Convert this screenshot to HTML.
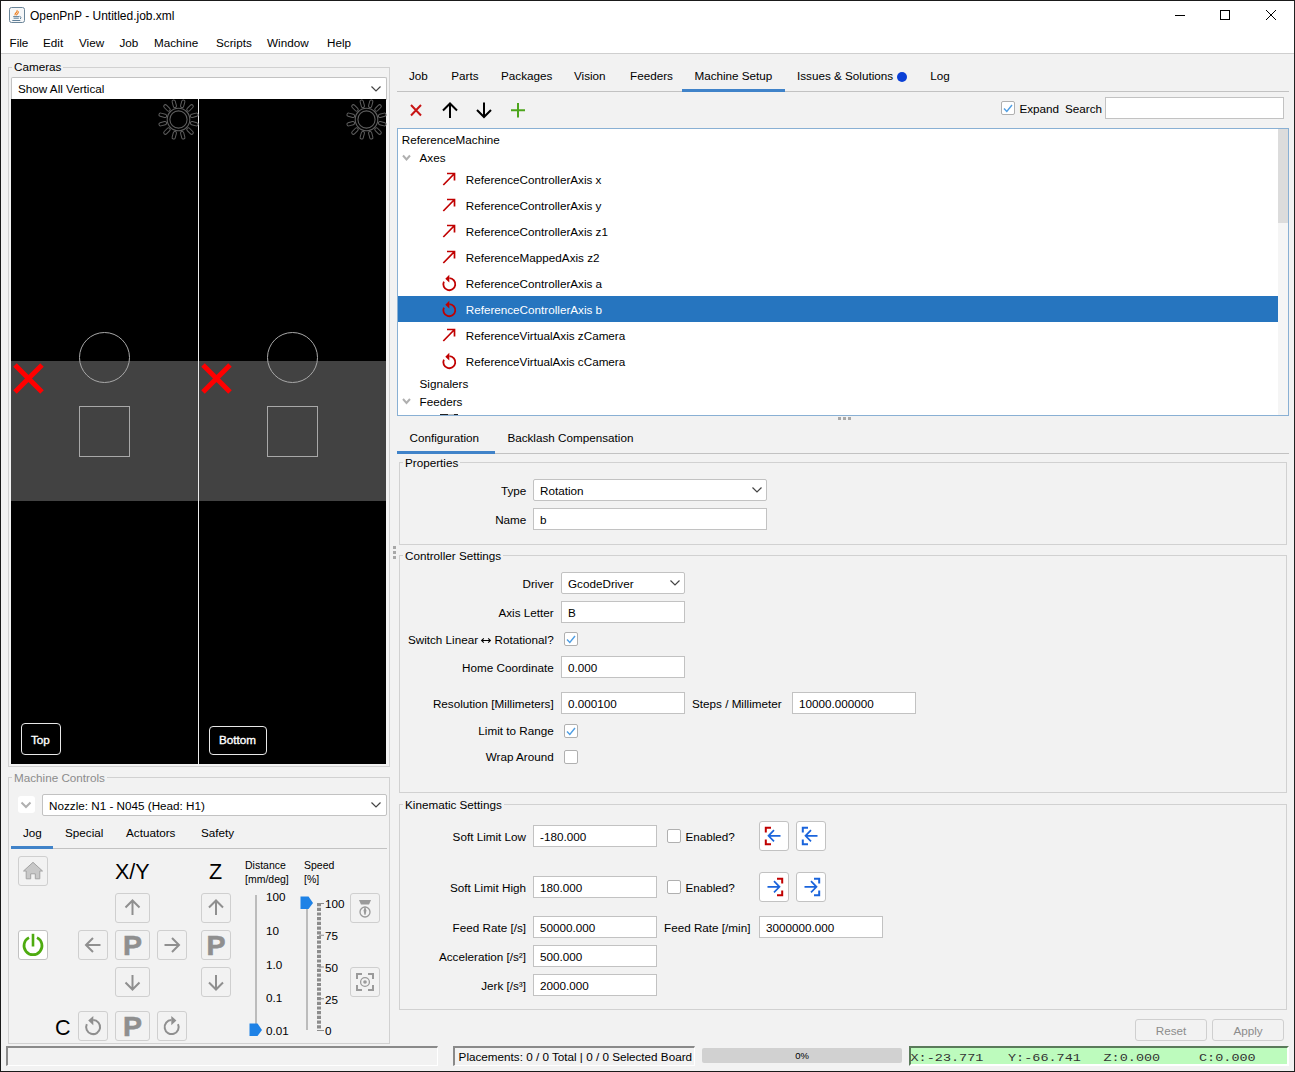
<!DOCTYPE html>
<html><head><meta charset="utf-8">
<style>
*{box-sizing:border-box;margin:0;padding:0}
html,body{width:1295px;height:1072px;overflow:hidden;background:#f2f2f2;font-family:"Liberation Sans",sans-serif;font-size:11.7px;color:#000}
.a{position:absolute}
.t{position:absolute;white-space:nowrap;line-height:16px;font-size:11.7px}
.r{text-align:right}
.grp{position:absolute;border:1px solid #d1d1d1}
.gl{position:absolute;white-space:nowrap;line-height:16px;background:#f2f2f2;padding:0 2px 0 2px}
.fld{position:absolute;background:#fff;border:1px solid #c2c2c2}
.cmb{position:absolute;background:#fff;border:1px solid #c2c2c2;border-radius:2px}
.chk{position:absolute;width:14px;height:14px;background:#fff;border:1px solid #b0b0b0;border-radius:2px}
.btn{position:absolute;border:1px solid #cfcfcf;border-radius:3px;background:#f2f2f2}
.wbtn{position:absolute;border:1px solid #c2c2c2;border-radius:3px;background:#fff}
svg{position:absolute;overflow:visible}
</style></head><body>
<!-- window frame -->
<div class="a" style="left:0;top:0;width:1295px;height:1072px;border:1px solid #1a1a1a;border-right-color:#222;"></div>
<!-- title + menu -->
<div class="a" style="left:1px;top:1px;width:1293px;height:52px;background:#fff"></div>
<div class="a" style="left:1px;top:53px;width:1293px;height:1px;background:#cfcfcf"></div>

<!-- title icon -->
<svg style="left:9px;top:7px" width="16" height="16" viewBox="0 0 16 16">
<rect x="0.5" y="0.5" width="15" height="15" rx="2" fill="#f6f7f8" stroke="#6a8599" stroke-width="1"/>
<path d="M6.2 8.3C5.3 7.2 6.6 6.3 7.6 5.2C8.4 4.3 8.2 3.6 7.9 3.1M7.3 8.2C8.5 7.3 9.8 6.2 9.4 4.4" stroke="#ee7b18" stroke-width="1.1" fill="none"/>
<path d="M4.2 9.6H10.5M4.6 11.2H9.8M3.3 13.5H11.3" stroke="#5f7f98" stroke-width="1"/>
<path d="M10.8 9.3Q13.2 10.3 11.2 12" stroke="#5f7f98" stroke-width="1" fill="none"/>
</svg>
<div class="t" style="left:30px;top:8px;font-size:12px">OpenPnP - Untitled.job.xml</div>
<!-- window controls -->
<div class="a" style="left:1175px;top:15px;width:10px;height:1px;background:#000"></div>
<div class="a" style="left:1220px;top:10px;width:10px;height:10px;border:1px solid #000"></div>
<svg style="left:1266px;top:10px" width="10" height="10" viewBox="0 0 10 10"><path d="M0 0L10 10M10 0L0 10" stroke="#000" stroke-width="1"/></svg>
<!-- menu -->
<div class="t" style="left:9.5px;top:35px">File</div>
<div class="t" style="left:43px;top:35px">Edit</div>
<div class="t" style="left:79px;top:35px">View</div>
<div class="t" style="left:119.5px;top:35px">Job</div>
<div class="t" style="left:154px;top:35px">Machine</div>
<div class="t" style="left:216px;top:35px">Scripts</div>
<div class="t" style="left:267px;top:35px">Window</div>
<div class="t" style="left:327px;top:35px">Help</div>

<!-- ===== LEFT PANEL ===== -->
<div class="grp" style="left:8px;top:67px;width:382px;height:700px"></div>
<div class="gl" style="left:12px;top:59px">Cameras</div>
<div class="cmb" style="left:11px;top:77px;width:376px;height:23px;border-bottom:none;border-radius:2px 2px 0 0"></div>
<div class="t" style="left:18px;top:81px">Show All Vertical</div>
<svg style="left:371px;top:86px" width="10" height="6" viewBox="0 0 10 6"><path d="M0.5 0.5L5 5L9.5 0.5" stroke="#444" stroke-width="1.2" fill="none"/></svg>
<!-- cameras -->
<div class="a" style="left:11px;top:99px;width:375px;height:665px;background:#000;overflow:hidden">
 <div class="a" style="left:0;top:262px;width:375px;height:140px;background:#424242"></div>
 <div class="a" style="left:187px;top:0;width:1px;height:665px;background:#ececec"></div>
</div>
<svg style="left:0;top:0" width="1295" height="1072" viewBox="0 0 1295 1072">
<circle cx="178.5" cy="119.5" r="11.3" fill="none" stroke="#5e5e5e" stroke-width="1.1"/><circle cx="178.5" cy="119.5" r="8.6" fill="none" stroke="#5e5e5e" stroke-width="1.1"/><rect x="-1.6" y="-20.2" width="3.2" height="7.8" rx="1.6" fill="none" stroke="#5e5e5e" stroke-width="1" transform="translate(178.5 119.5) rotate(15)"/><rect x="-1.6" y="-20.2" width="3.2" height="7.8" rx="1.6" fill="none" stroke="#5e5e5e" stroke-width="1" transform="translate(178.5 119.5) rotate(45)"/><rect x="-1.6" y="-20.2" width="3.2" height="7.8" rx="1.6" fill="none" stroke="#5e5e5e" stroke-width="1" transform="translate(178.5 119.5) rotate(75)"/><rect x="-1.6" y="-20.2" width="3.2" height="7.8" rx="1.6" fill="none" stroke="#5e5e5e" stroke-width="1" transform="translate(178.5 119.5) rotate(105)"/><rect x="-1.6" y="-20.2" width="3.2" height="7.8" rx="1.6" fill="none" stroke="#5e5e5e" stroke-width="1" transform="translate(178.5 119.5) rotate(135)"/><rect x="-1.6" y="-20.2" width="3.2" height="7.8" rx="1.6" fill="none" stroke="#5e5e5e" stroke-width="1" transform="translate(178.5 119.5) rotate(165)"/><rect x="-1.6" y="-20.2" width="3.2" height="7.8" rx="1.6" fill="none" stroke="#5e5e5e" stroke-width="1" transform="translate(178.5 119.5) rotate(195)"/><rect x="-1.6" y="-20.2" width="3.2" height="7.8" rx="1.6" fill="none" stroke="#5e5e5e" stroke-width="1" transform="translate(178.5 119.5) rotate(225)"/><rect x="-1.6" y="-20.2" width="3.2" height="7.8" rx="1.6" fill="none" stroke="#5e5e5e" stroke-width="1" transform="translate(178.5 119.5) rotate(255)"/><rect x="-1.6" y="-20.2" width="3.2" height="7.8" rx="1.6" fill="none" stroke="#5e5e5e" stroke-width="1" transform="translate(178.5 119.5) rotate(285)"/><rect x="-1.6" y="-20.2" width="3.2" height="7.8" rx="1.6" fill="none" stroke="#5e5e5e" stroke-width="1" transform="translate(178.5 119.5) rotate(315)"/><rect x="-1.6" y="-20.2" width="3.2" height="7.8" rx="1.6" fill="none" stroke="#5e5e5e" stroke-width="1" transform="translate(178.5 119.5) rotate(345)"/><circle cx="366.5" cy="119.5" r="11.3" fill="none" stroke="#5e5e5e" stroke-width="1.1"/><circle cx="366.5" cy="119.5" r="8.6" fill="none" stroke="#5e5e5e" stroke-width="1.1"/><rect x="-1.6" y="-20.2" width="3.2" height="7.8" rx="1.6" fill="none" stroke="#5e5e5e" stroke-width="1" transform="translate(366.5 119.5) rotate(15)"/><rect x="-1.6" y="-20.2" width="3.2" height="7.8" rx="1.6" fill="none" stroke="#5e5e5e" stroke-width="1" transform="translate(366.5 119.5) rotate(45)"/><rect x="-1.6" y="-20.2" width="3.2" height="7.8" rx="1.6" fill="none" stroke="#5e5e5e" stroke-width="1" transform="translate(366.5 119.5) rotate(75)"/><rect x="-1.6" y="-20.2" width="3.2" height="7.8" rx="1.6" fill="none" stroke="#5e5e5e" stroke-width="1" transform="translate(366.5 119.5) rotate(105)"/><rect x="-1.6" y="-20.2" width="3.2" height="7.8" rx="1.6" fill="none" stroke="#5e5e5e" stroke-width="1" transform="translate(366.5 119.5) rotate(135)"/><rect x="-1.6" y="-20.2" width="3.2" height="7.8" rx="1.6" fill="none" stroke="#5e5e5e" stroke-width="1" transform="translate(366.5 119.5) rotate(165)"/><rect x="-1.6" y="-20.2" width="3.2" height="7.8" rx="1.6" fill="none" stroke="#5e5e5e" stroke-width="1" transform="translate(366.5 119.5) rotate(195)"/><rect x="-1.6" y="-20.2" width="3.2" height="7.8" rx="1.6" fill="none" stroke="#5e5e5e" stroke-width="1" transform="translate(366.5 119.5) rotate(225)"/><rect x="-1.6" y="-20.2" width="3.2" height="7.8" rx="1.6" fill="none" stroke="#5e5e5e" stroke-width="1" transform="translate(366.5 119.5) rotate(255)"/><rect x="-1.6" y="-20.2" width="3.2" height="7.8" rx="1.6" fill="none" stroke="#5e5e5e" stroke-width="1" transform="translate(366.5 119.5) rotate(285)"/><rect x="-1.6" y="-20.2" width="3.2" height="7.8" rx="1.6" fill="none" stroke="#5e5e5e" stroke-width="1" transform="translate(366.5 119.5) rotate(315)"/><rect x="-1.6" y="-20.2" width="3.2" height="7.8" rx="1.6" fill="none" stroke="#5e5e5e" stroke-width="1" transform="translate(366.5 119.5) rotate(345)"/>
<circle cx="104.5" cy="357.5" r="25" fill="none" stroke="#a8a8a8" stroke-width="1"/>
<circle cx="292.5" cy="357.5" r="25" fill="none" stroke="#a8a8a8" stroke-width="1"/>
<rect x="79.5" y="406.5" width="50" height="50" fill="none" stroke="#a8a8a8" stroke-width="1"/>
<rect x="267.5" y="406.5" width="50" height="50" fill="none" stroke="#a8a8a8" stroke-width="1"/>
<path d="M15 365L42 392M42 365L15 392" stroke="#ff0000" stroke-width="5"/>
<path d="M203 365L230 392M230 365L203 392" stroke="#ff0000" stroke-width="5"/>
</svg>
<div class="a" style="left:21px;top:723px;width:40px;height:32px;border:1.3px solid #e8e8e8;border-radius:4px"></div>
<div class="t" style="left:31px;top:732px;color:#fff;font-size:11.7px;-webkit-text-stroke:0.35px #fff">Top</div>
<div class="a" style="left:209px;top:726px;width:58px;height:29px;border:1.3px solid #e8e8e8;border-radius:4px"></div>
<div class="t" style="left:219px;top:732px;color:#fff;font-size:11.7px;-webkit-text-stroke:0.35px #fff">Bottom</div>

<!-- machine controls -->
<div class="grp" style="left:8px;top:777px;width:382px;height:267px"></div>
<div class="gl" style="left:12px;top:770px;color:#8c8c8c">Machine Controls</div>
<div class="a" style="left:18px;top:796px;width:17px;height:17px;background:#fff;border-radius:3px"></div>
<svg style="left:21px;top:802px" width="10" height="6" viewBox="0 0 10 6"><path d="M0.5 0.5L5 5L9.5 0.5" stroke="#b0b0b0" stroke-width="2" fill="none"/></svg>
<div class="cmb" style="left:42px;top:794px;width:345px;height:22px"></div>
<div class="t" style="left:49px;top:798px">Nozzle: N1 - N045 (Head: H1)</div>
<svg style="left:371px;top:802px" width="10" height="6" viewBox="0 0 10 6"><path d="M0.5 0.5L5 5L9.5 0.5" stroke="#444" stroke-width="1.2" fill="none"/></svg>
<div class="t" style="left:23px;top:825px">Jog</div>
<div class="t" style="left:65px;top:825px">Special</div>
<div class="t" style="left:126px;top:825px">Actuators</div>
<div class="t" style="left:201px;top:825px">Safety</div>
<div class="a" style="left:11px;top:848px;width:376px;height:1px;background:#c2c2c2"></div>
<div class="a" style="left:11px;top:846px;width:42px;height:3px;background:#4083c9"></div>
<div class="a" style="left:18px;top:856px;width:30px;height:30px;border:1px solid #cfcfcf;border-radius:3px;background:#f2f2f2"></div><div class="a" style="left:18px;top:930px;width:30px;height:30px;border:1px solid #c2c2c2;border-radius:3px;background:#fff"></div><div class="a" style="left:115px;top:893px;width:35px;height:30px;border:1px solid #cfcfcf;border-radius:3px;background:#f2f2f2"></div><div class="a" style="left:78px;top:930px;width:30px;height:30px;border:1px solid #cfcfcf;border-radius:3px;background:#f2f2f2"></div><div class="a" style="left:115px;top:930px;width:35px;height:30px;border:1px solid #cfcfcf;border-radius:3px;background:#f2f2f2"></div><div class="a" style="left:157px;top:930px;width:30px;height:30px;border:1px solid #cfcfcf;border-radius:3px;background:#f2f2f2"></div><div class="a" style="left:115px;top:967px;width:35px;height:30px;border:1px solid #cfcfcf;border-radius:3px;background:#f2f2f2"></div><div class="a" style="left:201px;top:893px;width:30px;height:30px;border:1px solid #cfcfcf;border-radius:3px;background:#f2f2f2"></div><div class="a" style="left:201px;top:930px;width:30px;height:30px;border:1px solid #cfcfcf;border-radius:3px;background:#f2f2f2"></div><div class="a" style="left:201px;top:967px;width:30px;height:30px;border:1px solid #cfcfcf;border-radius:3px;background:#f2f2f2"></div><div class="a" style="left:78px;top:1011px;width:30px;height:30px;border:1px solid #cfcfcf;border-radius:3px;background:#f2f2f2"></div><div class="a" style="left:115px;top:1011px;width:35px;height:30px;border:1px solid #cfcfcf;border-radius:3px;background:#f2f2f2"></div><div class="a" style="left:157px;top:1011px;width:30px;height:30px;border:1px solid #cfcfcf;border-radius:3px;background:#f2f2f2"></div><div class="a" style="left:350px;top:893px;width:30px;height:30px;border:1px solid #cfcfcf;border-radius:3px;background:#f2f2f2"></div><div class="a" style="left:350px;top:967px;width:30px;height:30px;border:1px solid #cfcfcf;border-radius:3px;background:#f2f2f2"></div><svg style="left:0;top:0" width="1295" height="1072" viewBox="0 0 1295 1072"><path d="M23.5 871L33 862.3L42.5 871H39.8V878.8H35.3V873.8H30.7V878.8H26.2V871Z" fill="#c8c8c8" stroke="#a3a3a3" stroke-width="1" stroke-linejoin="miter"/><path d="M29 937.6A9 9 0 1 0 37 937.6" stroke="#4eab10" stroke-width="2.7" fill="none"/><path d="M33 933.8V946.5" stroke="#4eab10" stroke-width="2.6"/><path d="M132.5 915.0V900.5M125.5 907.5L132.5 900.5L139.5 907.5" stroke="#8f8f8f" stroke-width="2" fill="none"/><path d="M132.5 975.0V989.5M125.5 982.5L132.5 989.5L139.5 982.5" stroke="#8f8f8f" stroke-width="2" fill="none"/><path d="M100.5 945H86M93 938L86 945L93 952" stroke="#8f8f8f" stroke-width="2" fill="none"/><path d="M164.5 945H179M172 938L179 945L172 952" stroke="#8f8f8f" stroke-width="2" fill="none"/><path d="M216 915.0V900.5M209 907.5L216 900.5L223 907.5" stroke="#8f8f8f" stroke-width="2" fill="none"/><path d="M216 975.0V989.5M209 982.5L216 989.5L223 982.5" stroke="#8f8f8f" stroke-width="2" fill="none"/><text x="132.5" y="955.3" font-family="Liberation Sans" font-weight="bold" font-size="28.5" stroke="#8f8f8f" stroke-width="0.6" fill="#8f8f8f" text-anchor="middle">P</text><text x="216" y="955.3" font-family="Liberation Sans" font-weight="bold" font-size="28.5" stroke="#8f8f8f" stroke-width="0.6" fill="#8f8f8f" text-anchor="middle">P</text><text x="132.5" y="1036.3" font-family="Liberation Sans" font-weight="bold" font-size="28.5" stroke="#8f8f8f" stroke-width="0.6" fill="#8f8f8f" text-anchor="middle">P</text><path d="M86.8 1024.1A7 7 0 1 0 93.2 1020.1" stroke="#8f8f8f" stroke-width="2" fill="none"/><path d="M88.2 1020.6L93.3 1015.9V1025.2Z" fill="#8f8f8f"/><path d="M178 1024.1A7 7 0 1 1 171.4 1020.1" stroke="#8f8f8f" stroke-width="2" fill="none"/><path d="M176.4 1020.6L171.3 1015.9V1025.2Z" fill="#8f8f8f"/><path d="M359 900H371L369 904.6H361Z" fill="#9a9a9a"/><circle cx="365" cy="912" r="5" fill="none" stroke="#9a9a9a" stroke-width="1.3"/><path d="M365 906L366.4 910.5L365.6 914.8H364.4L363.6 910.5Z" fill="#9a9a9a"/><path d="M357 979V974H362M368 974H373V979M373 985V990H368M362 990H357V985" stroke="#9a9a9a" stroke-width="2" fill="none"/><circle cx="365" cy="982" r="4.4" fill="none" stroke="#9a9a9a" stroke-width="1.3"/><circle cx="365" cy="982" r="1.8" fill="#9a9a9a"/><rect x="255" y="895" width="2" height="135" fill="#bcbcbc"/><path d="M249.5 1023.5H257.5L262 1030L257.5 1036H249.5Z" fill="#1e82e6"/><rect x="306" y="908" width="2" height="122" fill="#bcbcbc"/><path d="M300.5 896.5H308.5L313 903L308.5 909H300.5Z" fill="#1e82e6"/><path d="M319 903V1031" stroke="#8c8c8c" stroke-width="4" stroke-dasharray="3.2 1.5"/><path d="M319 903.50H324" stroke="#8c8c8c" stroke-width="1"/><path d="M319 935.25H324" stroke="#8c8c8c" stroke-width="1"/><path d="M319 967.00H324" stroke="#8c8c8c" stroke-width="1"/><path d="M319 998.75H324" stroke="#8c8c8c" stroke-width="1"/><path d="M319 1030.50H324" stroke="#8c8c8c" stroke-width="1"/></svg>
<div class="t" style="left:115px;top:860px;font-size:21.5px;line-height:24px">X/Y</div>
<div class="t" style="left:209px;top:860px;font-size:21.5px;line-height:24px">Z</div>
<div class="t" style="left:55px;top:1016px;font-size:21.5px;line-height:24px">C</div>
<div class="t" style="left:245px;top:858.5px;font-size:10.5px;line-height:13px">Distance</div>
<div class="t" style="left:245px;top:872.5px;font-size:10.5px;line-height:13px">[mm/deg]</div>
<div class="t" style="left:304px;top:858.5px;font-size:10.5px;line-height:13px">Speed</div>
<div class="t" style="left:304px;top:872.5px;font-size:10.5px;line-height:13px">[%]</div>
<div class="t" style="left:266px;top:889px">100</div>
<div class="t" style="left:266px;top:923px">10</div>
<div class="t" style="left:266px;top:957px">1.0</div>
<div class="t" style="left:266px;top:990px">0.1</div>
<div class="t" style="left:266px;top:1023px">0.01</div>
<div class="t" style="left:325px;top:896px">100</div>
<div class="t" style="left:325px;top:928px">75</div>
<div class="t" style="left:325px;top:960px">50</div>
<div class="t" style="left:325px;top:992px">25</div>
<div class="t" style="left:325px;top:1023px">0</div>
<!-- ===== RIGHT PANEL ===== -->
<div class="t" style="left:409px;top:68px;">Job</div><div class="t" style="left:451.3px;top:68px;">Parts</div><div class="t" style="left:501px;top:68px;">Packages</div><div class="t" style="left:574px;top:68px;">Vision</div><div class="t" style="left:630px;top:68px;">Feeders</div><div class="t" style="left:694.4px;top:68px;">Machine Setup</div><div class="t" style="left:797px;top:68px;">Issues &amp; Solutions</div><div class="t" style="left:930.2px;top:68px;">Log</div><div class="a" style="left:397px;top:91px;width:892px;height:1px;background:#c2c2c2"></div><div class="a" style="left:682px;top:89px;width:103px;height:3px;background:#4083c9"></div><div class="a" style="left:896.5px;top:71.5px;width:10px;height:10px;border-radius:50%;background:#0b40d6"></div><svg style="left:0;top:0" width="1295" height="1072" viewBox="0 0 1295 1072"><path d="M411 105L421 115.5M421 105L411 115.5" stroke="#c81414" stroke-width="2"/><path d="M450 118V103.5M443 110.5L450 103.5L457 110.5" stroke="#000" stroke-width="2" fill="none"/><path d="M484 102.5V117M477 110L484 117L491 110" stroke="#000" stroke-width="2" fill="none"/><path d="M518 103V117.5M511 110.3H525" stroke="#4da51c" stroke-width="2" fill="none"/></svg><div class="chk" style="left:1001px;top:101px;width:14px;height:14px"></div><svg style="left:1003px;top:104px" width="10" height="9" viewBox="0 0 10 9"><path d="M1 4.5L3.8 7.5L9 1" stroke="#4f9ee3" stroke-width="1.4" fill="none"/></svg><div class="t" style="left:1019.4px;top:101px;">Expand</div><div class="t" style="left:1065px;top:101px;">Search</div><div class="fld" style="left:1105px;top:97px;width:179px;height:22px"></div><div class="a" style="left:397px;top:128px;width:892px;height:288px;background:#fff;border:1px solid #89b0d4"></div><div class="a" style="left:1278px;top:129px;width:10px;height:286px;background:#f5f5f5"></div><div class="a" style="left:1278px;top:129px;width:10px;height:94px;background:#dcdcdc"></div><div class="a" style="left:398px;top:296px;width:880px;height:26px;background:#2675bf"></div><div class="t" style="left:401.7px;top:132px;">ReferenceMachine</div><div class="t" style="left:419.5px;top:150px;">Axes</div><div class="t" style="left:465.7px;top:172px;color:#000">ReferenceControllerAxis x</div><div class="t" style="left:465.7px;top:198px;color:#000">ReferenceControllerAxis y</div><div class="t" style="left:465.7px;top:224px;color:#000">ReferenceControllerAxis z1</div><div class="t" style="left:465.7px;top:250px;color:#000">ReferenceMappedAxis z2</div><div class="t" style="left:465.7px;top:276px;color:#000">ReferenceControllerAxis a</div><div class="t" style="left:465.7px;top:302px;color:#fff">ReferenceControllerAxis b</div><div class="t" style="left:465.7px;top:328px;color:#000">ReferenceVirtualAxis zCamera</div><div class="t" style="left:465.7px;top:354px;color:#000">ReferenceVirtualAxis cCamera</div><svg style="left:0;top:0" width="1295" height="1072" viewBox="0 0 1295 1072"><path d="M403 155.5L406.5 159.5L410 155.5" stroke="#b0b0b0" stroke-width="2" fill="none"/><path d="M403 399L406.5 403L410 399" stroke="#b0b0b0" stroke-width="2" fill="none"/><path d="M443.3 185.0L454.5 173.5M447 173.5H454.5V180.5" stroke="#c00000" stroke-width="1.7" fill="none"/><path d="M443.3 211.0L454.5 199.5M447 199.5H454.5V206.5" stroke="#c00000" stroke-width="1.7" fill="none"/><path d="M443.3 237.0L454.5 225.5M447 225.5H454.5V232.5" stroke="#c00000" stroke-width="1.7" fill="none"/><path d="M443.3 263.0L454.5 251.5M447 251.5H454.5V258.5" stroke="#c00000" stroke-width="1.7" fill="none"/><path d="M443.9 281.6A6 6 0 1 0 449.4 278.2" stroke="#c00000" stroke-width="1.8" fill="none"/><path d="M445.3 278.7L449.3 274.8V282.4Z" fill="#c00000"/><path d="M443.9 307.6A6 6 0 1 0 449.4 304.2" stroke="#c00000" stroke-width="1.8" fill="none"/><path d="M445.3 304.7L449.3 300.8V308.4Z" fill="#c00000"/><path d="M443.3 341.0L454.5 329.5M447 329.5H454.5V336.5" stroke="#c00000" stroke-width="1.7" fill="none"/><path d="M443.9 359.6A6 6 0 1 0 449.4 356.2" stroke="#c00000" stroke-width="1.8" fill="none"/><path d="M445.3 356.7L449.3 352.8V360.4Z" fill="#c00000"/></svg><div class="t" style="left:419.5px;top:376px;">Signalers</div><div class="t" style="left:419.5px;top:394px;">Feeders</div><div class="a" style="left:440px;top:414px;width:8px;height:1px;background:#222"></div><div class="a" style="left:448px;top:414px;width:6px;height:1px;background:#bbb"></div><div class="a" style="left:454px;top:414px;width:4px;height:1px;background:#222"></div><div class="a" style="left:838px;top:417px;width:3px;height:3px;background:#a8a8a8"></div><div class="a" style="left:843px;top:417px;width:3px;height:3px;background:#a8a8a8"></div><div class="a" style="left:848px;top:417px;width:3px;height:3px;background:#a8a8a8"></div><div class="a" style="left:393px;top:546px;width:3px;height:3px;background:#a8a8a8"></div><div class="a" style="left:393px;top:551px;width:3px;height:3px;background:#a8a8a8"></div><div class="a" style="left:393px;top:556px;width:3px;height:3px;background:#a8a8a8"></div><div class="t" style="left:409.5px;top:430px;">Configuration</div><div class="t" style="left:507.4px;top:430px;">Backlash Compensation</div><div class="a" style="left:397px;top:453px;width:892px;height:1px;background:#c2c2c2"></div><div class="a" style="left:397px;top:451px;width:98px;height:3px;background:#4083c9"></div>
<!-- groups -->
<div class="grp" style="left:399px;top:462px;width:888px;height:83px"></div><div class="gl" style="left:403px;top:455px">Properties</div><div class="t r" style="right:768.7px;top:483px;">Type</div><div class="cmb" style="left:533px;top:479px;width:234px;height:22px"></div><div class="t" style="left:540px;top:483px;">Rotation</div><svg style="left:752px;top:487px" width="10" height="6" viewBox="0 0 10 6"><path d="M0.5 0.5L5 5L9.5 0.5" stroke="#444" stroke-width="1.2" fill="none"/></svg><div class="t r" style="right:768.7px;top:512px;">Name</div><div class="fld" style="left:533px;top:508px;width:234px;height:22px"></div><div class="t" style="left:540px;top:512px;">b</div><div class="grp" style="left:399px;top:555px;width:888px;height:238px"></div><div class="gl" style="left:403px;top:548px">Controller Settings</div><div class="t r" style="right:741.3px;top:576px;">Driver</div><div class="cmb" style="left:561px;top:572px;width:124px;height:22px"></div><div class="t" style="left:568px;top:576px;">GcodeDriver</div><svg style="left:670px;top:580px" width="10" height="6" viewBox="0 0 10 6"><path d="M0.5 0.5L5 5L9.5 0.5" stroke="#444" stroke-width="1.2" fill="none"/></svg><div class="t r" style="right:741.3px;top:605px;">Axis Letter</div><div class="fld" style="left:561px;top:601px;width:124px;height:22px"></div><div class="t" style="left:568px;top:605px;">B</div><div class="t r" style="right:741.3px;top:632px;">Switch Linear <svg style="position:static;display:inline-block;vertical-align:0px" width="10" height="7" viewBox="0 0 10 7"><path d="M0.6 3.5H9.4M2.8 1.3L0.6 3.5L2.8 5.7M7.2 1.3L9.4 3.5L7.2 5.7" stroke="#000" stroke-width="1.1" fill="none"/></svg> Rotational?</div><div class="chk" style="left:564px;top:632px"></div><svg style="left:566px;top:635px" width="10" height="9" viewBox="0 0 10 9"><path d="M1 4.5L3.8 7.5L9 1" stroke="#4f9ee3" stroke-width="1.4" fill="none"/></svg><div class="t r" style="right:741.3px;top:660px;">Home Coordinate</div><div class="fld" style="left:561px;top:656px;width:124px;height:22px"></div><div class="t" style="left:568px;top:660px;">0.000</div><div class="t r" style="right:741.3px;top:696px;">Resolution [Millimeters]</div><div class="fld" style="left:561px;top:692px;width:124px;height:22px"></div><div class="t" style="left:568px;top:696px;">0.000100</div><div class="t" style="left:692px;top:696px;">Steps / Millimeter</div><div class="fld" style="left:792px;top:692px;width:124px;height:22px"></div><div class="t" style="left:799px;top:696px;">10000.000000</div><div class="t r" style="right:741.3px;top:723px;">Limit to Range</div><div class="chk" style="left:564px;top:724px"></div><svg style="left:566px;top:727px" width="10" height="9" viewBox="0 0 10 9"><path d="M1 4.5L3.8 7.5L9 1" stroke="#4f9ee3" stroke-width="1.4" fill="none"/></svg><div class="t r" style="right:741.3px;top:749px;">Wrap Around</div><div class="chk" style="left:564px;top:750px"></div><div class="grp" style="left:399px;top:804px;width:888px;height:206px"></div><div class="gl" style="left:403px;top:797px">Kinematic Settings</div><div class="t r" style="right:769px;top:829px;">Soft Limit Low</div><div class="fld" style="left:533px;top:825px;width:124px;height:22px"></div><div class="t" style="left:540px;top:829px;">-180.000</div><div class="chk" style="left:667px;top:829px"></div><div class="t" style="left:685.4px;top:829px;">Enabled?</div><div class="t r" style="right:769px;top:880px;">Soft Limit High</div><div class="fld" style="left:533px;top:876px;width:124px;height:22px"></div><div class="t" style="left:540px;top:880px;">180.000</div><div class="chk" style="left:667px;top:880px"></div><div class="t" style="left:685.4px;top:880px;">Enabled?</div><div class="t r" style="right:769px;top:920px;">Feed Rate [/s]</div><div class="fld" style="left:533px;top:916px;width:124px;height:22px"></div><div class="t" style="left:540px;top:920px;">50000.000</div><div class="t" style="left:664px;top:920px;">Feed Rate [/min]</div><div class="fld" style="left:759px;top:916px;width:124px;height:22px"></div><div class="t" style="left:766px;top:920px;">3000000.000</div><div class="t r" style="right:769px;top:949px;">Acceleration [/s&#178;]</div><div class="fld" style="left:533px;top:945px;width:124px;height:22px"></div><div class="t" style="left:540px;top:949px;">500.000</div><div class="t r" style="right:769px;top:978px;">Jerk [/s&#179;]</div><div class="fld" style="left:533px;top:974px;width:124px;height:22px"></div><div class="t" style="left:540px;top:978px;">2000.000</div><div class="wbtn" style="left:759px;top:821px;width:30px;height:30px"></div><div class="wbtn" style="left:796px;top:821px;width:30px;height:30px"></div><div class="wbtn" style="left:759px;top:872px;width:30px;height:30px"></div><div class="wbtn" style="left:796px;top:872px;width:30px;height:30px"></div><svg style="left:0;top:0" width="1295" height="1072" viewBox="0 0 1295 1072"><path d="M771 827.8H765.8V832.5M765.8 839.5V844.2H771" stroke="#c00000" stroke-width="2" fill="none"/><path d="M780.5 835.8H768.5M774 830.2L768.5 835.8L774 841.4" stroke="#1a64dc" stroke-width="1.7" fill="none"/><path d="M808 827.8H802.8V832.5M802.8 839.5V844.2H808" stroke="#1a64dc" stroke-width="2" fill="none"/><path d="M817.5 835.8H805.5M811 830.2L805.5 835.8L811 841.4" stroke="#1a64dc" stroke-width="1.7" fill="none"/><path d="M777 878.8H782.2V883.5M782.2 890.5V895.2H777" stroke="#c00000" stroke-width="2" fill="none"/><path d="M767.5 886.8H779.5M774 881.2L779.5 886.8L774 892.4" stroke="#1a64dc" stroke-width="1.7" fill="none"/><path d="M814 878.8H819.2V883.5M819.2 890.5V895.2H814" stroke="#1a64dc" stroke-width="2" fill="none"/><path d="M804.5 886.8H816.5M811 881.2L816.5 886.8L811 892.4" stroke="#1a64dc" stroke-width="1.7" fill="none"/></svg><div class="btn" style="left:1135px;top:1019px;width:72px;height:22px;border-color:#cfcfcf"></div><div class="btn" style="left:1212px;top:1019px;width:72px;height:22px;border-color:#cfcfcf"></div><div class="t" style="left:1135px;top:1023px;width:72px;text-align:center;color:#8c8c8c">Reset</div><div class="t" style="left:1212px;top:1023px;width:72px;text-align:center;color:#8c8c8c">Apply</div><div class="a" style="left:6px;top:1046px;width:432px;height:20px;border-top:2px solid #8a8a8a;border-left:2px solid #8a8a8a;border-bottom:1px solid #fff;border-right:1px solid #fff"></div><div class="a" style="left:453px;top:1046px;width:242px;height:20px;border-top:2px solid #8a8a8a;border-left:2px solid #8a8a8a;border-bottom:1px solid #fff;border-right:1px solid #fff"></div><div class="t" style="left:458.6px;top:1049px;">Placements: 0 / 0 Total | 0 / 0 Selected Board</div><div class="a" style="left:702px;top:1048px;width:200px;height:15px;background:#d1d1d1;border-radius:2px"></div><div class="t" style="left:702px;top:1048px;width:200px;text-align:center;font-size:9.5px;line-height:15px">0%</div><div class="a" style="left:909px;top:1046px;width:380px;height:20px;background:#bdfbbd;border-top:2px solid #5a7a5a;border-left:2px solid #5a7a5a;border-bottom:2px solid #fff;border-right:2px solid #fff"></div><div class="t" style="left:910.5px;top:1049.5px;font-family:'Liberation Mono',monospace;font-size:13.5px;line-height:15px;transform:scaleY(0.86);transform-origin:0 12px;color:#333">X:-23.771</div><div class="t" style="left:1008px;top:1049.5px;font-family:'Liberation Mono',monospace;font-size:13.5px;line-height:15px;transform:scaleY(0.86);transform-origin:0 12px;color:#333">Y:-66.741</div><div class="t" style="left:1103.5px;top:1049.5px;font-family:'Liberation Mono',monospace;font-size:13.5px;line-height:15px;transform:scaleY(0.86);transform-origin:0 12px;color:#333">Z:0.000</div><div class="t" style="left:1199px;top:1049.5px;font-family:'Liberation Mono',monospace;font-size:13.5px;line-height:15px;transform:scaleY(0.86);transform-origin:0 12px;color:#333">C:0.000</div>
</body></html>
